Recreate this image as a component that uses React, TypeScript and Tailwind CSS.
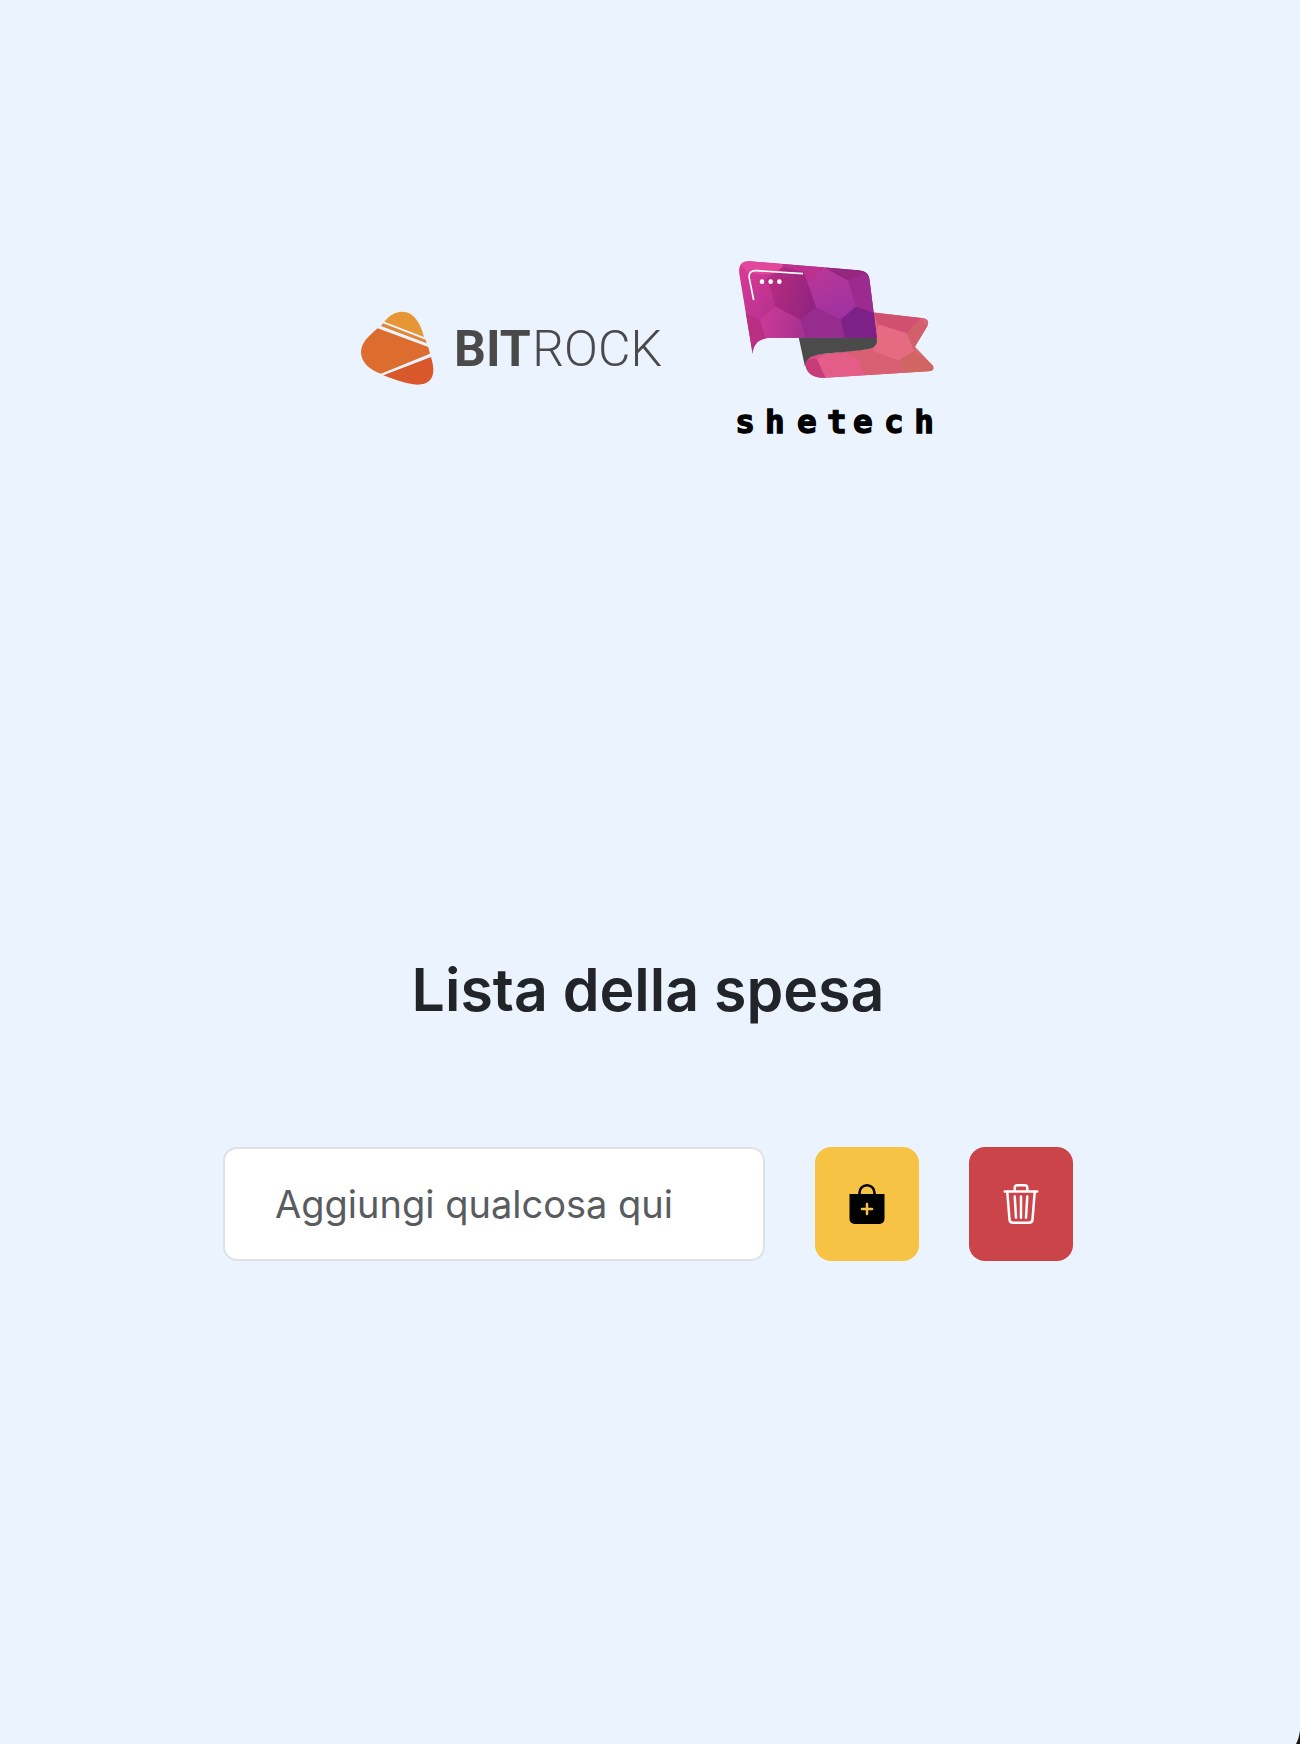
import { useState } from "react";
import { BsBagPlusFill, BsTrash3 } from "react-icons/bs";

function BitrockLogo() {
  return (
    <svg viewBox="24 31 912 255" className="h-[85px] w-[304px]" role="img" aria-label="Bitrock">
      <path d="M103 66C118 47 135 36 157 36C192 36 212 72 222 112Z" fill="#e69635" />
      <path d="M93 79L99 71L227 120L230 131Z" fill="#e18632" />
      <path d="M83 86L235 142L240 162L93 222C60 212 33 188 33 157C33 130 56 109 83 86Z" fill="#dd6d2e" />
      <path d="M100 227L243 172C247 186 250 199 250 212C250 240 232 255 203 255C170 254 130 239 100 227Z" fill="#d9582b" />
      <g fill="#4a4a4a" fontFamily="Roboto, sans-serif" fontSize="150">
        <text x="312" y="200" fontWeight="700">BIT</text>
        <text x="547" y="200" fontWeight="300">ROCK</text>
      </g>
    </svg>
  );
}

function ShetechLogo() {
  return (
    <svg viewBox="27 33 612 549" className="h-[183px] w-[204px]" role="img" aria-label="Shetech">
      <defs>
        <linearGradient id="front" x1="0" y1="0" x2="1" y2="0.5">
          <stop offset="0" stopColor="#dc3b95" />
          <stop offset="1" stopColor="#86238b" />
        </linearGradient>
        <linearGradient id="shade" x1="0" y1="0" x2="1" y2="0.3">
          <stop offset="0" stopColor="#bd2e80" />
          <stop offset="1" stopColor="#952480" />
        </linearGradient>
        <linearGradient id="bright" x1="0" y1="0" x2="0.4" y2="1">
          <stop offset="0" stopColor="#bb3897" />
          <stop offset="1" stopColor="#a032a0" />
        </linearGradient>
        <linearGradient id="lower" x1="0" y1="0" x2="1" y2="0.2">
          <stop offset="0" stopColor="#cf3b99" />
          <stop offset="1" stopColor="#a9318f" />
        </linearGradient>
        <linearGradient id="ribbon" x1="0" y1="0" x2="1" y2="0">
          <stop offset="0" stopColor="#d94a86" />
          <stop offset="0.5" stopColor="#e0607e" />
          <stop offset="1" stopColor="#d56a68" />
        </linearGradient>
        <clipPath id="frontClip">
          <path d="M83 312L43 72C40 46 49 33 75 34L400 61C424 64 432 72 434 92L456 268V263H140C104 263 84 280 83 312Z" />
        </clipPath>
        <clipPath id="ribbonClip">
          <path d="M440 187L595 205C610 208 613 217 606 230L570 290L622 345C630 355 626 362 610 364L300 383C265 385 245 370 241 345C240 320 262 313 300 311L430 297Z" />
        </clipPath>
      </defs>
      <g clipPath="url(#ribbonClip)">
        <rect x="230" y="180" width="400" height="210" fill="url(#ribbon)" />
        <path d="M440 180L610 205L585 208L545 250L460 225Z" fill="#d05070" />
        <path d="M583 200H615V225L606 230Z" fill="#dc6678" />
        <path d="M460 223L545 250L568 303L520 332L445 303Z" fill="#e56a82" />
        <path d="M545 250L585 208L608 230L570 290L568 303Z" fill="#d45f6c" />
        <path d="M568 303L630 350L625 370H545L520 332Z" fill="#d16563" />
        <path d="M445 303L520 332L545 370L420 378L400 327L360 309L430 297Z" fill="#d95f73" />
        <path d="M275 326L300 312L360 309L400 327L420 378L303 386Z" fill="#e35d88" />
        <path d="M235 330L275 326L303 386H240Z" fill="#c63c78" />
      </g>
      <path d="M221 262H454C461 283 448 294 430 297C400 303 330 308 300 311C256 315 241 326 240 350Z" fill="#4b4b4b" />
      <g clipPath="url(#frontClip)">
        <rect x="40" y="30" width="420" height="290" fill="url(#front)" />
        <path d="M40 30H170L175 50L160 67L110 74L66 66L50 45Z" fill="#e3479b" />
        <path d="M110 95L175 50L235 62L248 98L274 172L226 210L152 170L132 102Z" fill="url(#shade)" />
        <path d="M170 38L298 48V55L248 97L235 66L175 50Z" fill="#bc3190" />
        <path d="M298 50L440 60L370 92Z" fill="#96267f" />
        <path d="M370 92L440 60L450 200L393 170Z" fill="#9b2b8e" />
        <path d="M298 55L370 92L393 170L345 209L274 172L248 97Z" fill="url(#bright)" />
        <path d="M393 170L452 190L460 266H360L347 209Z" fill="#7d2189" />
        <path d="M274 172L347 209L360 266H242L226 209Z" fill="#962d8e" />
        <path d="M152 170L226 209L242 266H120L105 210Z" fill="url(#lower)" />
        <path d="M60 188L105 210L120 266L80 315Z" fill="#b92f81" />
      </g>
      <path d="M86 150L73 85C70 69 78 61 94 62L234 71" fill="none" stroke="#fff" strokeWidth="5" />
      <g fill="#fff">
        <circle cx="111" cy="95" r="7" />
        <circle cx="137" cy="95" r="7" />
        <circle cx="163" cy="95" r="7" />
      </g>
      <text
        x="31 120 216 306 384 477 568"
        y="549"
        fill="#000"
        stroke="#000"
        strokeWidth="4"
        fontFamily="'DejaVu Sans Mono', monospace"
        fontWeight="700"
        fontSize="98"
      >
        shetech
      </text>
    </svg>
  );
}

export default function App() {
  const [item, setItem] = useState("");
  return (
    <div className="relative min-h-screen overflow-hidden bg-[#ebf4fe] pr-1 font-[Inter,sans-serif] text-[#212529]">
      <header className="flex items-center justify-center gap-[72px] pt-[261px]">
        <BitrockLogo />
        <ShetechLogo />
      </header>
      <main className="mx-auto mt-[506px] max-w-[850px]">
        <h1 className="text-center text-[59px] leading-[80px] font-semibold">Lista della spesa</h1>
        <form className="mt-[117px] flex gap-[50px]" onSubmit={(e) => e.preventDefault()}>
          <input
            type="text"
            aria-label="Aggiungi qualcosa qui"
            placeholder="Aggiungi qualcosa qui"
            value={item}
            onChange={(e) => setItem(e.target.value)}
            className="h-[114px] min-w-0 flex-1 rounded-[14px] border-2 border-[#dee2e6] bg-white px-[50px] text-[38px] placeholder:text-[#595c5f]"
          />
          <button type="submit" aria-label="Aggiungi" className="flex w-[104px] items-center justify-center rounded-2xl bg-[#f6c344] text-black">
            <BsBagPlusFill size={40} />
          </button>
          <button type="button" aria-label="Elimina" onClick={() => setItem("")} className="flex w-[104px] items-center justify-center rounded-2xl bg-[#cb444a] text-white">
            <BsTrash3 size={40} />
          </button>
        </form>
      </main>
      <svg viewBox="0 0 4 14" className="absolute right-0 bottom-0 h-[14px] w-1" aria-hidden="true">
        <path d="M4 0Q3 9 0 14H4Z" fill="#14160c" />
      </svg>
    </div>
  );
}
